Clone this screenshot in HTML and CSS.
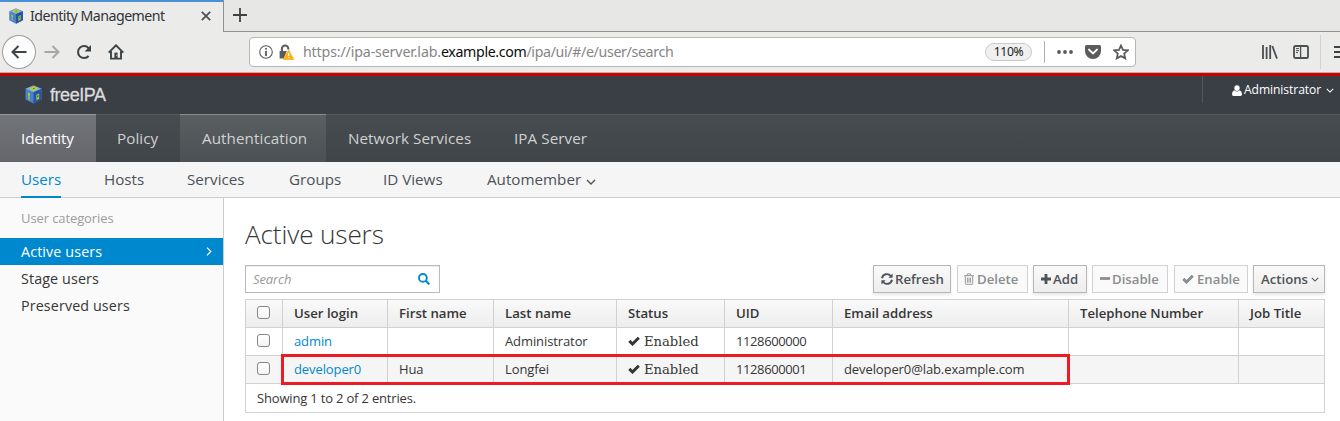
FILE: index.html
```html
<!DOCTYPE html>
<html lang="en">
<head>
<meta charset="utf-8">
<title>Identity Management</title>
<link rel="stylesheet" href="styles.css">
</head>
<body>
<svg class="defs" width="0" height="0" aria-hidden="true">
  <symbol id="cube" viewBox="0 0 20 20">
    <path d="M10 .6 18.6 4v11.3L10 19.6 1.6 15.3V4z" fill="#4a80cc"/>
    <path d="M10 .6 18.6 4 10 7.6 1.6 4z" fill="#86abd8"/>
    <path d="M10 7.6 18.6 4v11.3L10 19.6z" fill="#2454a3"/>
    <path d="M6.2 3.1 10.4 1.4l3.8 1.5-.7 2.2-3.6 1.1-3.3-1.3z" fill="#b5cf3a"/>
    <path d="M9 3.6l1.8-.6.8.8-1.7.7z" fill="#4f7440"/>
    <path d="M4.200 8 6.300 8.900v2.200l-.6.2.400 4.400-1.500-.8-.1-4.300-.5-.4z" fill="#a9c83b"/>
    <path d="M13 10.200 16 8.900v5.600l-3 1.600z" fill="#a9c83b"/>
    <path d="M13.8 11.2l1.500-.7v2l-1.500.7z" fill="#46713f"/>
  </symbol>
  <symbol id="check" viewBox="0 0 12 10"><path d="M1.3 4.900 4.500 8 10.800 1.700" fill="none" stroke="currentColor" stroke-width="3"/></symbol>
  <symbol id="chev" viewBox="0 0 10 6"><path d="M1 1l4 4 4-4" fill="none" stroke="currentColor" stroke-width="1.3"/></symbol>
</svg>

<div class="tabs">
  <div class="tab">
    <svg class="tab-logo"><use href="#cube"/></svg>
    <span class="tab-title">Identity Management</span>
    <svg class="tab-close" viewBox="0 0 10 10"><path d="M.8.8l8.4 8.4M9.2.8.8 9.2" stroke="#4a5052" stroke-width="1.7"/></svg>
  </div>
  <div class="tabs-rest"><svg width="14" height="14" viewBox="0 0 14 14"><path d="M7 0v14M0 7h14" stroke="#3c4346" stroke-width="1.8"/></svg></div>
</div>

<div class="toolbar">
  <div class="back"><svg width="16" height="14" viewBox="0 0 16 14"><path d="M15.5 7H1.5M7.5 1 1.5 7l6 6" fill="none" stroke="#3c4346" stroke-width="2"/></svg></div>
  <svg class="fwd" viewBox="0 0 16 14"><path d="M.5 7h14M8.5 1l6 6-6 6" fill="none" stroke="#a5a6a5" stroke-width="2"/></svg>
  <svg class="reload" viewBox="0 0 16 16"><path d="M12.6 12A6 6 0 1 1 12.8 4.4" fill="none" stroke="#3c4346" stroke-width="2"/><path d="M15 1v6.4H8.6z" fill="#3c4346"/></svg>
  <svg class="home" viewBox="0 0 16 16"><path d="M.7 8.6 8 1.3l7.3 7.3M3 7.2V14.6h10V7.2" fill="none" stroke="#3c4346" stroke-width="1.9"/><path d="M6.4 14V8.6h3.2V14z" fill="#3c4346"/><path d="M8.2 10.8h1v1h-1z" fill="#eaeae9"/></svg>
  <div class="urlbar">
    <svg class="info" viewBox="0 0 14 14"><circle cx="7" cy="7" r="6.3" fill="none" stroke="#5b5b5b" stroke-width="1.1"/><path d="M6.1 3h1.8v1.6H6.1zM6.1 5.8h1.8V11H6.1z" fill="#5b5b5b"/></svg>
    <svg class="lock" viewBox="0 0 15 16"><path d="M2.900 8V4.600a3.200 3.200 0 0 1 6.400 0V5.400" fill="none" stroke="#5b5b5b" stroke-width="2"/><path d="M.6 7h7.200l-3 7.400H.6z" fill="#5b5b5b"/><path d="M9.600 6 14.800 15.400H4.400z" fill="#ffb013" stroke="#ffb013" stroke-width=".8" stroke-linejoin="round"/><path d="M9 9h1.3v3H9zM9 12.9h1.3v1.2H9z" fill="#fff"/></svg>
    <div class="url">https://ipa-server.lab.<b>example.com</b><span>/ipa/ui/#/e/user/search</span></div>
    <div class="zoomlevel">110%</div>
    <div class="url-sep"></div>
    <svg class="dots" viewBox="0 0 16 4"><g fill="#5b5b5b"><circle cx="2" cy="2" r="1.9"/><circle cx="8" cy="2" r="1.9"/><circle cx="14" cy="2" r="1.9"/></g></svg>
    <svg class="pocket" viewBox="0 0 16 14"><path d="M1.6 0h12.8Q16 0 16 1.6V6a8 8 0 0 1-16 0V1.6Q0 0 1.6 0z" fill="#5b5b5b"/><path d="M4 4.6l4 3.8 4-3.8" fill="none" stroke="#fff" stroke-width="2" stroke-linecap="round"/></svg>
    <svg class="star" viewBox="0 0 16 16"><path d="M8 1.5l2 4.400 4.800.5-3.600 3.200 1 4.800L8 12l-4.200 2.400 1-4.800L1.200 6.400 6 5.900z" fill="none" stroke="#5b5b5b" stroke-width="1.8"/></svg>
  </div>
  <svg class="library" viewBox="0 0 16 14"><path d="M1 0v14M4.6 2v12M8.2 0v14M10.3 1 15 13.6" stroke="#4a5052" stroke-width="1.8"/></svg>
  <svg class="panel" viewBox="0 0 16 14"><rect x="1" y="1" width="14" height="12" rx="1.6" fill="none" stroke="#4a5052" stroke-width="1.8"/><path d="M7.6 1v12" stroke="#4a5052" stroke-width="1.3"/><path d="M3 3.6h3M3 5.6h3M3 7.6h2" stroke="#4a5052"/></svg>
  <div class="tool-sep"></div>
  <svg class="menu" viewBox="0 0 6 12"><path d="M0 1h6M0 6h6M0 11h6" stroke="#3c4346" stroke-width="1.8"/></svg>
</div>

<div class="header">
  <svg class="brand-logo"><use href="#cube"/></svg>
  <div class="brand">freeIPA</div>
  <div class="user">
    <svg class="user-icon" viewBox="0 0 10 11"><path d="M5 .2a2.700 2.900 0 0 1 2.700 2.900C7.700 4.800 6.500 6.100 5 6.100S2.300 4.800 2.300 3.100A2.700 2.900 0 0 1 5 .2zM2.200 5.200Q5 8 7.800 5.200 10 6 10 9.300 10 11 8.400 11H1.600Q0 11 0 9.300 0 6 2.200 5.200z" fill="#fff"/></svg>
    <span class="user-name">Administrator</span>
    <svg class="user-chev"><use href="#chev"/></svg>
  </div>
</div>

<div class="nav">
  <div class="nav-item n1 active"><span>Identity</span></div>
  <div class="nav-item n2"><span>Policy</span></div>
  <div class="nav-item n3 hover"><span>Authentication</span></div>
  <div class="nav-item n4"><span>Network Services</span></div>
  <div class="nav-item n5"><span>IPA Server</span></div>
</div>
<div class="subnav">
  <div class="s1 current">Users</div>
  <div class="s2">Hosts</div>
  <div class="s3">Services</div>
  <div class="s4">Groups</div>
  <div class="s5">ID Views</div>
  <div class="s6">Automember<svg class="sub-chev"><use href="#chev"/></svg></div>
</div>

<div class="main">
  <div class="sidebar">
    <div class="side-title">User categories</div>
    <div class="side-item selected">Active users<svg width="6" height="9" viewBox="0 0 6 9"><path d="M1 .7l3.800 3.800L1 8.300" fill="none" stroke="#fff" stroke-width="1.200"/></svg></div>
    <div class="side-item">Stage users</div>
    <div class="side-item">Preserved users</div>
  </div>
  <div class="content">
    <h1>Active users</h1>
    <div class="actions">
      <div class="search"><span>Search</span><svg width="12" height="12" viewBox="0 0 12 12"><circle cx="4.900" cy="4.900" r="3.900" fill="none" stroke="#0088ce" stroke-width="1.900"/><path d="M7.800 7.800l3.500 3.500" stroke="#0088ce" stroke-width="2.200"/></svg></div>
      <div class="btn b1"><svg width="12" height="12" viewBox="0 0 12 12"><path d="M1 5.200A5 5 0 0 1 9.800 3M11 6.800A5 5 0 0 1 2.200 9" fill="none" stroke="currentColor" stroke-width="1.900"/><path d="M11.600.6v4.200H7.400zM.4 11.400V7.200h4.200z" fill="currentColor"/></svg><span>Refresh</span></div>
      <div class="btn b2 off"><svg width="10" height="12" viewBox="0 0 10 12"><path d="M0 2.700h10M3.200 2.500l.5-1.600h2.600l.5 1.600M1.300 3v7.600q0 .7.700.7h6q.7 0 .7-.7V3M3.400 4.700v5M5 4.700v5M6.600 4.700v5" fill="none" stroke="currentColor" stroke-width=".9"/></svg><span>Delete</span></div>
      <div class="btn b3"><svg width="10" height="10" viewBox="0 0 10 10"><path d="M5 0v10M0 5h10" stroke="currentColor" stroke-width="2.800"/></svg><span>Add</span></div>
      <div class="btn b4 off"><svg width="10" height="10" viewBox="0 0 10 10"><path d="M0 4.500h10" stroke="currentColor" stroke-width="2.800"/></svg><span>Disable</span></div>
      <div class="btn b5 off"><svg width="12" height="10"><use href="#check"/></svg><span>Enable</span></div>
      <div class="btn b6"><span>Actions</span><svg class="act-chev"><use href="#chev"/></svg></div>
    </div>
    <div class="table">
      <div class="row head"><div class="box"><i></i></div><div>User login</div><div>First name</div><div>Last name</div><div>Status</div><div>UID</div><div>Email address</div><div>Telephone Number</div><div>Job Title</div></div>
      <div class="row"><div class="box"><i></i></div><div class="link">admin</div><div></div><div>Administrator</div><div class="status"><svg width="12" height="10"><use href="#check"/></svg><span>Enabled</span></div><div class="uid">1128600000</div><div></div><div></div><div></div></div>
      <div class="row alt"><div class="box"><i></i></div><div class="link">developer0</div><div>Hua</div><div>Longfei</div><div class="status"><svg width="12" height="10"><use href="#check"/></svg><span>Enabled</span></div><div class="uid">1128600001</div><div class="mail">developer0@lab.example.com</div><div></div><div></div></div>
      <div class="foot">Showing 1 to 2 of 2 entries.</div>
      <div class="mark"></div>
    </div>
  </div>
</div>
</body>
</html>
```
FILE: styles.css
```css
* { box-sizing: border-box; }
body { margin: 0; width: 1340px; height: 421px; overflow: hidden; background: #fff; font: 13.2px/20px "Open Sans", sans-serif; color: #363636; white-space: nowrap; }
svg { display: block; flex: none; }
.defs { position: absolute; }

/* browser tabs */
.tabs { display: flex; height: 32px; font-family: "Noto Sans", sans-serif; }
.tab { width: 223px; background: #ebebea; border-top: 2px solid #4a90d9; display: flex; align-items: center; padding: 0 11px 2px 8px; }
.tab-logo { width: 16px; height: 16px; }
.tab-title { margin-left: 6px; font-size: 14.2px; letter-spacing: -.52px; color: #2e3436; width: 164px; }
.tab-close { width: 10px; height: 10px; margin-left: 7px; }
.tabs-rest { flex: 1; background: #e7e7e6; border-left: 1px solid #919191; border-bottom: 1px solid #919191; padding: 8px 0 0 9px; }

/* browser toolbar */
.toolbar { height: 41px; background: #ebebea; border-bottom: 1px solid #b5b5b2; display: flex; align-items: center; padding-left: 2px; font-family: "Noto Sans", sans-serif; }
.back { width: 34px; height: 34px; border: 1px solid #9b9b99; border-radius: 50%; background: #fcfcfc; display: flex; align-items: center; justify-content: center; }
.fwd { width: 16px; height: 14px; margin-left: 8px; }
.reload { width: 16px; height: 16px; margin-left: 16px; }
.home { width: 16px; height: 16px; margin-left: 16px; }
.urlbar { width: 888px; height: 30px; margin-left: 125px; background: #fff; border: 1px solid #b6b6b3; border-radius: 4px; display: flex; align-items: center; padding-left: 9px; }
.info { width: 14px; height: 14px; }
.lock { width: 15px; height: 16px; margin-left: 6px; }
.url { width: 682px; margin-left: 9px; font-size: 14.2px; letter-spacing: -.14px; color: #858585; }
.url b { font-weight: 400; color: #0c0c0d; letter-spacing: -.35px; }
.url span { letter-spacing: -.35px; }
.zoomlevel { width: 47px; height: 18px; border: 1px solid #c9c9c9; border-radius: 9px; background: #f0f0f0; font-size: 12.2px; letter-spacing: -.4px; line-height: 16px; text-align: center; color: #1c1c1c; }
.url-sep { width: 1px; height: 22px; background: #b1b1b1; margin-left: 12px; }
.dots { width: 16px; height: 4px; margin-left: 12px; }
.pocket { width: 16px; height: 14px; margin-left: 12px; }
.star { width: 16px; height: 16px; margin-left: 12px; }
.library { width: 16px; height: 14px; margin-left: 126px; }
.panel { width: 16px; height: 14px; margin-left: 15px; }
.tool-sep { width: 1px; height: 34px; background: #d2d2d0; margin-left: 11px; }
.menu { width: 6px; height: 12px; margin-left: 13px; }

/* masthead */
.header { height: 41px; background: #393f45; border-top: 3px solid #c00; display: flex; padding-left: 24px; color: #fff; }
.brand-logo { width: 19px; height: 19px; margin-top: 9px; }
.brand { width: 1152px; margin: 9px 0 0 7px; font: 18px/20px "Liberation Sans", sans-serif; letter-spacing: -.45px; color: #dcdddd; -webkit-text-stroke: .3px #dcdddd; }
.user { height: 27px; border-left: 1px solid #53565b; display: flex; padding-left: 29px; }
.user-icon { width: 10px; height: 11px; margin-top: 9px; }
.user-name { width: 77px; margin: 4px 0 0 2px; font-size: 12.1px; letter-spacing: -.07px; }
.user-chev { width: 8px; height: 5px; margin: 12px 0 0 5px; }

/* primary navigation */
.nav { height: 48px; display: flex; background: linear-gradient(#474c50, #3f4548); border-top: 1px solid #54595c; font-size: 15.2px; letter-spacing: .08px; color: #d1d1d1; }
.nav-item { height: 48px; margin-top: -1px; padding-top: 13px; border-top: 1px solid transparent; }
.n1 { width: 96px; padding-left: 21px; letter-spacing: -.1px; }
.n2 { width: 84px; padding-left: 21px; }
.n3 { width: 146px; padding-left: 22px; }
.n4 { width: 166px; padding-left: 22px; }
.n5 { padding-left: 22px; }
.active { background: linear-gradient(#72757a, #64666b); border-top-color: #949699; color: #fff; }
.hover { background: linear-gradient(#5a5f62, #4a5053); border-top-color: #8a8d90; }
.subnav { height: 36px; display: flex; padding-left: 21px; background: #f5f5f5; border-bottom: 1px solid #cecdcd; font-size: 15.2px; color: #4d5258; }
.subnav > div { height: 36px; padding-top: 7px; }
.subnav .current { width: 40px; color: #0088ce; border-bottom: 2px solid #0088ce; }
.s2 { margin-left: 43px; width: 83px; }
.s3 { width: 102px; }
.s4 { width: 94px; }
.s5 { width: 104px; }
.subnav .s6 { display: flex; }
.sub-chev { width: 10px; height: 6px; margin: 10px 0 0 5px; }

/* sidebar */
.main { display: flex; height: 223px; }
.sidebar { width: 224px; background: #fafafa; border-right: 1px solid #cecdcd; }
.side-title { padding: 10px 0 0 21px; height: 40px; color: #9c9c9c; font-size: 13px; letter-spacing: -.1px; }
.side-item { height: 27px; padding: 0 11px 0 21px; display: flex; align-items: center; justify-content: space-between; font-size: 14.3px; letter-spacing: .12px; }
.selected { background: #0088ce; color: #fff; }

/* content */
.content { padding-left: 21px; }
h1 { margin: 0; height: 67px; padding-top: 19px; font-size: 26.2px; letter-spacing: -.15px; line-height: 34px; font-weight: 300; }
.actions { display: flex; height: 28px; width: 1080px; }
.search { width: 195px; height: 28px; border: 1px solid #bababa; box-shadow: inset 0 1px 1px rgba(0,0,0,.08); display: flex; align-items: center; justify-content: space-between; padding: 0 9px 0 7px; margin-right: 433px; font-style: italic; font-size: 13px; letter-spacing: -.1px; color: #999; }
.btn { height: 28px; border: 1px solid #b7b7b7; background: linear-gradient(#fafafa, #ededed); box-shadow: 0 2px 3px rgba(3,3,3,.1); display: flex; align-items: center; padding-left: 7px; font-weight: 600; font-size: 13.2px; color: #4d5258; margin-right: 6px; }
.btn span { margin-left: 2px; }
.off { color: #8b8d8f; background: #fafafa; border-color: #d1d1d1; box-shadow: none; }
.b1 { width: 78px; }
.b2 { width: 71px; margin-right: 5px; }
.b2 svg { margin-left: -1px; }
.b2 span { margin-left: 3px; }
.b3 { width: 54px; margin-right: 5px; }
.b4 { width: 76px; }
.b5 { width: 74px; margin-right: 5px; }
.b5 span { margin-left: 3px; }
.b6 { width: 72px; margin-right: 0; }
.b6 span { margin-left: 0; }
.act-chev { width: 8px; height: 5px; margin-left: 3px; }

/* users table */
.table { position: relative; width: 1080px; margin-top: 6px; border-right: 1px solid #d1d1d1; border-bottom: 1px solid #d1d1d1; font-size: 13px; letter-spacing: -.1px; }
.row { height: 28px; display: grid; grid-template-columns: 37px 105px 106px 123px 108px 108px 236px 170px 86px; }
.row > div { border-left: 1px solid #d1d1d1; border-top: 1px solid #d1d1d1; padding: 3px 0 0 11px; }
.head { background: linear-gradient(#fafafa, #ededed); font-weight: 600; font-size: 13.2px; letter-spacing: 0; }
.alt { background: #f5f5f5; }
.row .box { padding-top: 6px; }
.box i { display: block; width: 13px; height: 13px; border: 1px solid #858585; border-radius: 3px; background: linear-gradient(#fff, #f4f4f4); }
.link { color: #0088ce; }
.row .uid { letter-spacing: -.4px; }
.row .status { display: flex; padding-top: 4px; font: 13.2px/20px "DejaVu Serif", serif; letter-spacing: -.05px; }
.status svg { margin-top: 4px; }
.status span { margin-left: 4px; }
.foot { height: 29px; border-left: 1px solid #d1d1d1; border-top: 1px solid #d1d1d1; padding: 4px 0 0 11px; letter-spacing: -.18px; }
.mark { position: absolute; left: 36px; top: 55px; width: 789px; height: 31px; border: 3px solid #ed1c24; }
```
